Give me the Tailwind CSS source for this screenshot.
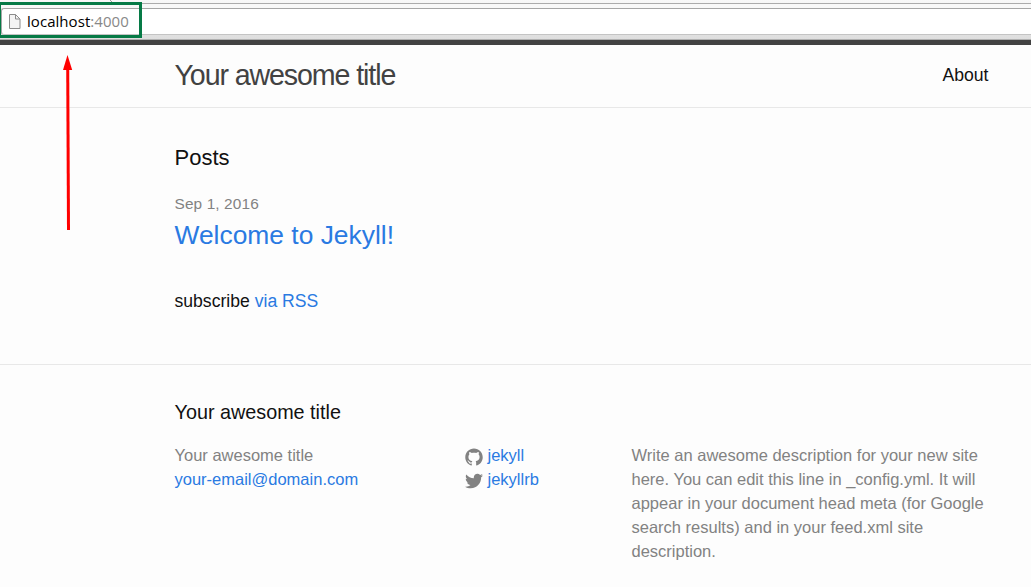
<!DOCTYPE html>
<html lang="en">
<head>
<meta charset="utf-8">
<title>Your awesome title</title>
<script src="https://cdn.jsdelivr.net/npm/@tailwindcss/browser@4"></script>
</head>
<body class="relative h-[587px] w-[1031px] overflow-hidden bg-[#fdfdfd] font-['Liberation_Sans',Arial,sans-serif] text-[#111] [&_p]:whitespace-nowrap">
  <div class="h-10 border-b border-[#b0b0b0] bg-linear-to-b from-[#f8f8f8] to-[#dedede] pt-[3px]">
    <div class="h-[5px] border-t border-[#ababab] bg-[#f8f8f8]"></div>
    <div class="ml-px flex h-[27px] items-center rounded-l-[3px] border border-r-0 border-t-[#a6a6a6] border-b-[#c4c4c4] border-l-[#a6a6a6] bg-white pl-[7px]">
      <svg class="h-[15px] w-3" viewBox="0 0 12 15" fill="#f4f4f4" stroke="#8c8c8c"><path d="M.5.5h6l4.500 4.500v9.500H.5z"/><path d="M6.500.5V5H11" fill="none"/></svg>
      <span class="ml-[6px] font-['Open_Sans',sans-serif] text-[15px] leading-none tracking-[0.050px] text-black">localhost<span class="text-[#888]">:4000</span></span>
    </div>
  </div>
  <header class="h-[68px] border-t-[5px] border-b border-b-[#e8e8e8] border-t-[#424242] pr-[42.500px] pl-[174.500px]">
    <div class="flex h-[61px] items-center justify-between">
      <p class="text-[28.600px] tracking-[-1.100px] text-[#424242]">Your awesome title</p>
      <p class="text-[17.600px]">About</p>
    </div>
  </header>
  <main class="h-[256px] pt-[33px] pl-[174.500px]">
    <p class="text-[22px] leading-[33px]">Posts</p>
    <p class="mt-[18px] text-[15.400px] leading-[23px] tracking-[0.120px] text-[#828282]">Sep 1, 2016</p>
    <p class="text-[26.400px] leading-[40px] text-[#2a7ae2]">Welcome to Jekyll!</p>
    <p class="mt-[33px] text-[17.600px] leading-[26px]">subscribe <span class="text-[#2a7ae2]">via RSS</span></p>
  </main>
  <footer class="border-t border-[#e8e8e8] pt-[33px] pl-[174.500px] text-[#828282]">
    <p class="text-[19.800px] leading-[28px] text-[#111]">Your awesome title</p>
    <div class="mt-[17px] flex text-[16.500px] leading-[24px]">
      <div class="w-[290.500px]">
        <p>Your awesome title</p>
        <p class="text-[#2a7ae2]">your-email@domain.com</p>
      </div>
      <div class="w-[166.500px] text-[#2a7ae2]">
        <div class="flex gap-[4.500px]">
          <svg class="mt-[5px] size-[18px]" viewBox="0 0 16 16" fill="#828282"><path d="M7.999,0.431c-4.285,0-7.760,3.474-7.760,7.761 c0,3.428,2.223,6.337,5.307,7.363c0.388,0.071,0.530-0.168,0.530-0.374c0-0.184-0.007-0.672-0.010-1.320 c-2.159,0.469-2.614-1.040-2.614-1.040c-0.353-0.896-0.862-1.135-0.862-1.135c-0.705-0.481,0.053-0.472,0.053-0.472 c0.779,0.055,1.189,0.800,1.189,0.800c0.692,1.186,1.816,0.843,2.258,0.645c0.071-0.502,0.271-0.843,0.493-1.037 C4.860,11.425,3.049,10.760,3.049,7.786c0-0.847,0.302-1.540,0.799-2.082C3.768,5.507,3.501,4.718,3.924,3.650 c0,0,0.652-0.209,2.134,0.796C6.677,4.273,7.340,4.187,8,4.184c0.659,0.003,1.323,0.089,1.943,0.261 c1.482-1.004,2.132-0.796,2.132-0.796c0.423,1.068,0.157,1.857,0.077,2.054c0.497,0.542,0.798,1.235,0.798,2.082 c0,2.981-1.814,3.637-3.543,3.829c0.279,0.240,0.527,0.713,0.527,1.437c0,1.037-0.010,1.874-0.010,2.129 c0,0.208,0.140,0.449,0.534,0.373c3.081-1.028,5.302-3.935,5.302-7.362C15.760,3.906,12.285,0.431,7.999,0.431z"/></svg>
          <p>jekyll</p>
        </div>
        <div class="flex gap-[4.500px]">
          <svg class="mt-[5px] size-[18px]" viewBox="0 0 16 16" fill="#828282"><path d="M15.969,3.058c-0.586,0.260-1.217,0.436-1.878,0.515c0.675-0.405,1.194-1.045,1.438-1.809c-0.632,0.375-1.332,0.647-2.076,0.793c-0.596-0.636-1.446-1.033-2.387-1.033c-1.806,0-3.270,1.464-3.270,3.270 c0,0.256,0.029,0.506,0.085,0.745C5.163,5.404,2.753,4.102,1.140,2.124C0.859,2.607,0.698,3.168,0.698,3.767 c0,1.134,0.577,2.135,1.455,2.722C1.616,6.472,1.112,6.325,0.671,6.080c0,0.014,0,0.027,0,0.041c0,1.584,1.127,2.906,2.623,3.206 C3.020,9.402,2.731,9.442,2.433,9.442c-0.211,0-0.416-0.021-0.615-0.059c0.416,1.299,1.624,2.245,3.055,2.271 c-1.119,0.877-2.529,1.400-4.061,1.400c-0.264,0-0.524-0.015-0.780-0.046c1.447,0.928,3.166,1.469,5.013,1.469 c6.015,0,9.304-4.983,9.304-9.304c0-0.142-0.003-0.283-0.009-0.423C14.976,4.290,15.531,3.714,15.969,3.058z"/></svg>
          <p>jekyllrb</p>
        </div>
      </div>
      <div>
        <p>Write an awesome description for your new site</p>
        <p>here. You can edit this line in _config.yml. It will</p>
        <p>appear in your document head meta (for Google</p>
        <p>search results) and in your feed.xml site</p>
        <p>description.</p>
      </div>
    </div>
  </footer>
  <div class="absolute top-[2px] left-[-2px] h-9 w-36 border-[3px] border-[#067a46]"></div>
  <svg class="absolute top-0 left-[109px] h-[2px] w-[5px]" viewBox="0 0 5 2"><path d="M1 0L3 2" stroke="#999"/></svg>
  <svg class="absolute top-[54px] left-[60px] h-[178px] w-4" viewBox="0 0 16 178"><path d="M7.700 12L8.500 176" stroke="#f00" stroke-width="3"/><path d="M7.500 1L12.200 16H3z" fill="#f00"/></svg>
</body>
</html>
